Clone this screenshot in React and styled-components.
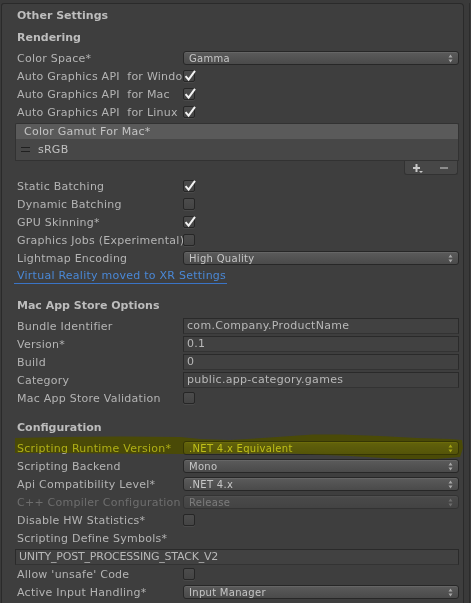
import React from 'react';
import styled, { createGlobalStyle } from 'styled-components';

const GlobalStyle = createGlobalStyle`
  html, body {
    margin: 0;
    padding: 0;
    background: #3a3a3a;
    height: 100%;
    overflow: hidden;
  }
  body {
    font-family: "DejaVu Sans", "Liberation Sans", sans-serif;
    font-size: 11px;
    color: #b4b4b4;
  }
`;

const Window = styled.div`
  display: flex;
  height: 603px;
  padding-top: 3px;
  padding-left: 1px;
  box-sizing: border-box;
`;

const Panel = styled.div`
  width: 464px;
  box-sizing: border-box;
  background: #3e3e3e;
  border: 1px solid #2a2a2a;
  border-bottom: none;
  border-radius: 3px 4px 0 0;
  padding: 1px 4px 0 13px;
  overflow: hidden;
`;

const EdgeStrip = styled.div`
  width: 6px;
  border-right: 1px solid #2c2c2c;
  margin-right: 1px;
  box-sizing: border-box;
`;

const FoldoutTitle = styled.div`
  height: 18px;
  line-height: 18px;
  margin-top: 2px;
  padding-left: 2px;
  font-weight: bold;
  color: #bdbdbd;
`;

const SectionHeader = styled.div`
  height: 18px;
  line-height: 18px;
  margin-top: ${p => p.$gap || 12}px;
  margin-bottom: 2px;
  padding-left: 2px;
  font-weight: bold;
  color: #bdbdbd;
`;

const Row = styled.div`
  position: relative;
  display: flex;
  align-items: center;
  height: 18px;
`;

const Label = styled.div`
  width: 166px;
  padding-left: 2px;
  flex: none;
  white-space: pre;
  overflow: hidden;
  letter-spacing: 0.25px;
  color: ${p => (p.$disabled ? '#6e6e6e' : '#b4b4b4')};
`;

const Value = styled.div`
  flex: 1;
  display: flex;
  align-items: center;
  min-width: 0;
`;

const PopupBox = styled.div`
  flex: 1;
  height: 14px;
  box-sizing: border-box;
  display: flex;
  align-items: center;
  justify-content: space-between;
  padding: 0 5px 0 5px;
  border: 1px solid #272727;
  border-radius: 3px;
  background: linear-gradient(#5b5b5b, #4a4a4a);
  box-shadow: inset 0 1px 0 rgba(255, 255, 255, 0.07);
  font-size: 10px;
  letter-spacing: 0.3px;
  color: #c6c6c6;
  opacity: ${p => (p.$disabled ? 0.45 : 1)};
`;

const Arrows = styled.svg`
  width: 5px;
  height: 9px;
  flex: none;
`;

const Popup = ({ value, disabled }) => (
  <PopupBox $disabled={disabled}>
    <span>{value}</span>
    <Arrows viewBox="0 0 5 9">
      <path d="M0.5 3.5 L2.5 0.5 L4.5 3.5 Z M0.5 5.5 L2.5 8.5 L4.5 5.5 Z" fill="#a8a8a8" />
    </Arrows>
  </PopupBox>
);

const CheckBox = styled.div`
  position: relative;
  width: 12px;
  height: 12px;
  box-sizing: border-box;
  border: 1px solid #262626;
  border-radius: 2px;
  background: linear-gradient(#4c4c4c, #444444);
  box-shadow: 0 1px 0 rgba(255, 255, 255, 0.06);
`;

const Tick = styled.svg`
  position: absolute;
  left: 0px;
  top: -1px;
  width: 12px;
  height: 12px;
  overflow: visible;
`;

const Toggle = ({ on }) => (
  <CheckBox>
    {on && (
      <Tick viewBox="0 0 12 12">
        <path d="M2.2 6.8 L4.6 9.6 L10.4 1.6" fill="none" stroke="#f2f2f2" strokeWidth="2" strokeLinecap="square" />
      </Tick>
    )}
  </CheckBox>
);

const TextField = styled.div`
  flex: 1;
  height: 16px;
  line-height: 14px;
  box-sizing: border-box;
  padding-left: 3px;
  border: 1px solid #2a2a2a;
  border-bottom-color: #333333;
  background: #414141;
  color: #b8b8b8;
  letter-spacing: 0.3px;
  white-space: nowrap;
  overflow: hidden;
`;

const WideField = styled(TextField)`
  margin-top: 1px;
  letter-spacing: -0.2px;
`;

const ListBlock = styled.div`
  margin: 2px 0;
`;

const ListHeader = styled.div`
  height: 16px;
  line-height: 15px;
  box-sizing: border-box;
  padding-left: 8px;
  background: #5a5a5a;
  border: 1px solid #323232;
  border-bottom: none;
  border-radius: 2px 2px 0 0;
  letter-spacing: 0.25px;
  color: #c4c4c4;
`;

const ListBody = styled.div`
  height: 22px;
  box-sizing: border-box;
  display: flex;
  align-items: center;
  gap: 8px;
  padding-left: 5px;
  background: #474747;
  border: 1px solid #323232;
  border-top: none;
  letter-spacing: 0.25px;
  color: #c0c0c0;
`;

const Handle = styled.span`
  width: 9px;
  height: 3px;
  border-top: 1px solid #202020;
  border-bottom: 1px solid #202020;
`;

const ListFooter = styled.div`
  display: flex;
  justify-content: flex-end;
`;

const FooterButtons = styled.div`
  width: 54px;
  height: 14px;
  box-sizing: border-box;
  display: flex;
  align-items: center;
  justify-content: space-around;
  background: #474747;
  border: 1px solid #323232;
  border-top: none;
  border-radius: 0 0 3px 3px;
  margin-right: 1px;
`;

const FooterIcon = styled.svg`
  width: 10px;
  height: 10px;
`;

const LinkRow = styled.div`
  height: 18px;
  display: flex;
  align-items: flex-start;
`;

const Link = styled.span`
  margin-left: -1px;
  padding: 2px 1px 0 3px;
  height: 14px;
  line-height: 14px;
  letter-spacing: 0.25px;
  color: #4a88d6;
  border-bottom: 1px solid #3a74c6;
`;

const Marker = styled.svg`
  position: absolute;
  left: -2px;
  top: -6px;
  width: 452px;
  height: 28px;
  pointer-events: none;
`;

const markerPath =
  'M2,5 L47,4 L107,3.5 L167,4 L187,6 L217,7 L257,4.5 L300,1.5 L327,1.5 L367,3 L404,5 L437,6 L449,7 L450,15 L447,24 L417,26.5 L387,26 L337,23 L277,20.5 L217,20.5 L167,21 L107,20.5 L47,20 L2,20 Z';

const HighlightMark = () => (
  <Marker viewBox="0 0 452 28">
    <path d={markerPath} fill="#f0f020" style={{ mixBlendMode: 'multiply' }} />
    <path d={markerPath} fill="#ffff00" opacity="0.08" />
  </Marker>
);

const Field = ({ label, disabled, children }) => (
  <Row>
    <Label $disabled={disabled}>{label}</Label>
    <Value>{children}</Value>
  </Row>
);

export default function App() {
  return (
    <>
      <GlobalStyle />
      <Window>
        <Panel>
          <FoldoutTitle>Other Settings</FoldoutTitle>

          <SectionHeader $gap={4}>Rendering</SectionHeader>
          <Field label="Color Space*"><Popup value="Gamma" /></Field>
          <Field label="Auto Graphics API  for Windows"><Toggle on /></Field>
          <Field label="Auto Graphics API  for Mac"><Toggle on /></Field>
          <Field label="Auto Graphics API  for Linux"><Toggle on /></Field>

          <ListBlock>
            <ListHeader>Color Gamut For Mac*</ListHeader>
            <ListBody>
              <Handle />
              <span>sRGB</span>
            </ListBody>
            <ListFooter>
              <FooterButtons>
                <FooterIcon viewBox="0 0 10 10">
                  <path d="M0 4 H7 V6 H0 Z M2.5 1 H4.5 V9 H2.5 Z" fill="#c8c8c8" />
                  <path d="M6 8 H10 L8 10 Z" fill="#c8c8c8" />
                </FooterIcon>
                <FooterIcon viewBox="0 0 10 10">
                  <path d="M1 4 H9 V6 H1 Z" fill="#8c8c8c" />
                </FooterIcon>
              </FooterButtons>
            </ListFooter>
          </ListBlock>

          <Field label="Static Batching"><Toggle on /></Field>
          <Field label="Dynamic Batching"><Toggle /></Field>
          <Field label="GPU Skinning*"><Toggle on /></Field>
          <Field label="Graphics Jobs (Experimental)"><Toggle /></Field>
          <Field label="Lightmap Encoding"><Popup value="High Quality" /></Field>
          <LinkRow><Link>Virtual Reality moved to XR Settings</Link></LinkRow>

          <SectionHeader $gap={12}>Mac App Store Options</SectionHeader>
          <Field label="Bundle Identifier"><TextField>com.Company.ProductName</TextField></Field>
          <Field label="Version*"><TextField>0.1</TextField></Field>
          <Field label="Build"><TextField>0</TextField></Field>
          <Field label="Category"><TextField>public.app-category.games</TextField></Field>
          <Field label="Mac App Store Validation"><Toggle /></Field>

          <SectionHeader $gap={12}>Configuration</SectionHeader>
          <Row>
            <Label>Scripting Runtime Version*</Label>
            <Value><Popup value=".NET 4.x Equivalent" /></Value>
            <HighlightMark />
          </Row>
          <Field label="Scripting Backend"><Popup value="Mono" /></Field>
          <Field label="Api Compatibility Level*"><Popup value=".NET 4.x" /></Field>
          <Field label="C++ Compiler Configuration" disabled><Popup value="Release" disabled /></Field>
          <Field label="Disable HW Statistics*"><Toggle /></Field>
          <Row><Label>Scripting Define Symbols*</Label></Row>
          <Row>
            <WideField>UNITY_POST_PROCESSING_STACK_V2</WideField>
          </Row>
          <Field label="Allow 'unsafe' Code"><Toggle /></Field>
          <Field label="Active Input Handling*"><Popup value="Input Manager" /></Field>
        </Panel>
        <EdgeStrip />
      </Window>
    </>
  );
}
